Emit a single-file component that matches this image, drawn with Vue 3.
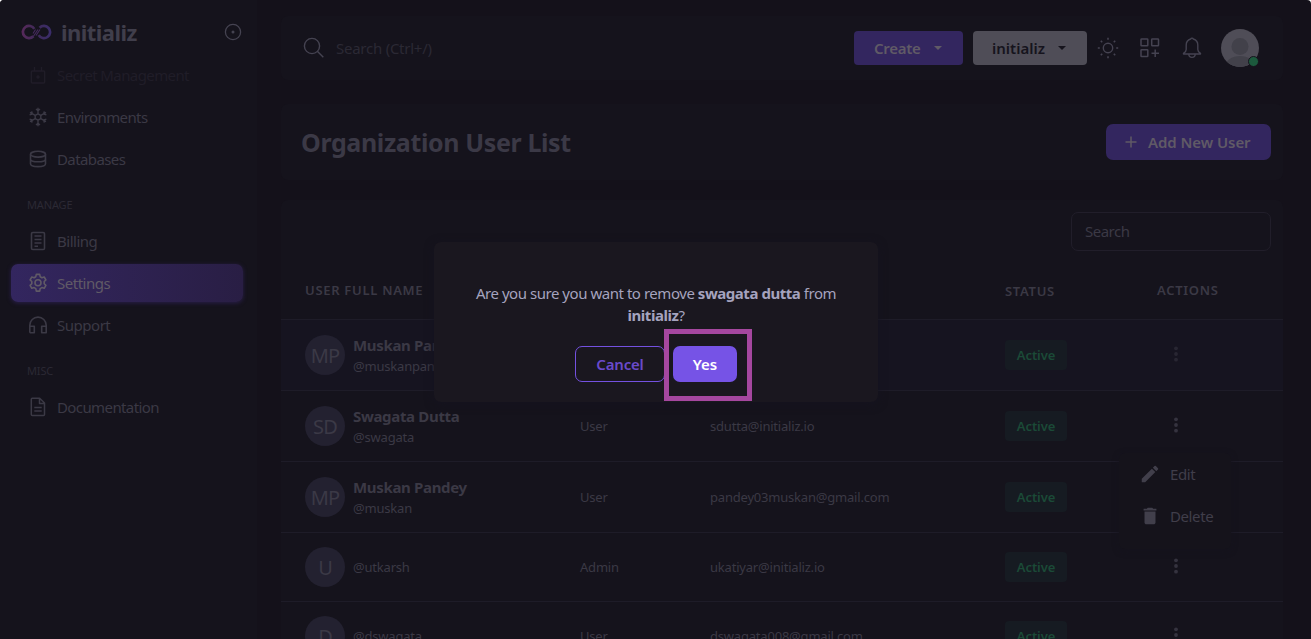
<script setup>
const mainNav = [
  { label: 'Environments', icon: 'snow' },
  { label: 'Databases', icon: 'db' },
]
const manageNav = [
  { label: 'Billing', icon: 'bill' },
  { label: 'Settings', icon: 'gear', active: true },
  { label: 'Support', icon: 'head' },
]
const groups = [
  { title: null, items: mainNav },
  { title: 'MANAGE', items: manageNav },
  { title: 'MISC', items: [{ label: 'Documentation', icon: 'doc' }] },
]
const users = [
  { initials: 'MP', name: 'Muskan Pandey', handle: '@muskanpandey', role: 'User', email: 'muskan@initializ.io', faded: true },
  { initials: 'SD', name: 'Swagata Dutta', handle: '@swagata', role: 'User', email: 'sdutta@initializ.io' },
  { initials: 'MP', name: 'Muskan Pandey', handle: '@muskan', role: 'User', email: 'pandey03muskan@gmail.com' },
  { initials: 'U', handle: '@utkarsh', role: 'Admin', email: 'ukatiyar@initializ.io' },
  { initials: 'D', handle: '@dswagata', role: 'User', email: 'dswagata008@gmail.com' },
]
</script>

<template>
  <div class="page">
    <aside class="sidebar">
      <div class="brand">
        <svg class="logo" width="31" height="16" viewBox="0 0 31 16" fill="none">
          <defs>
            <linearGradient id="lg" x1="0" y1="0" x2="31" y2="0" gradientUnits="userSpaceOnUse">
              <stop offset="0" stop-color="#58295a" />
              <stop offset=".5" stop-color="#3f2a58" />
              <stop offset="1" stop-color="#3a2d6c" />
            </linearGradient>
          </defs>
          <path d="M13.300 4.900A6.100 6.100 0 1 0 12.400 12.200M17.700 11.100A6.100 6.100 0 1 0 18.600 3.800" stroke="url(#lg)" stroke-width="2.700" />
          <path d="M12.300 12.500l4.700-7M15 11.500l4-6M12 9.500l2.500-4" stroke="#462b5e" stroke-width="1.100" />
        </svg>
        <span class="brand-name">initializ</span>
        <svg class="pin" width="18" height="18" viewBox="0 0 18 18" fill="none">
          <circle cx="9" cy="9" r="7.600" stroke="#454351" stroke-width="1.300" />
          <circle cx="9" cy="9" r="1.500" fill="#454351" />
        </svg>
      </div>
      <div class="item ghost">
        <svg width="20" height="20" viewBox="0 0 20 20" fill="none" stroke="currentColor" stroke-width="1.400">
          <rect x="3.300" y="6" width="13.400" height="12" rx="1" />
          <path d="M6.500 2v4M13.500 2v4" />
          <circle cx="10" cy="12" r="1" fill="currentColor" />
        </svg>
        <span>Secret Management</span>
      </div>
      <template v-for="(g, gi) in groups" :key="gi">
        <div v-if="g.title" class="group">{{ g.title }}</div>
        <div v-for="it in g.items" :key="it.label" class="item" :class="{ active: it.active }">
          <svg width="20" height="20" viewBox="0 0 20 20" fill="none" stroke="currentColor" stroke-width="1.600" stroke-linejoin="round">
            <g v-if="it.icon === 'snow'" stroke-width="1.400">
              <path d="M10 .8v6M10 13.200v6M2 5.400l5.200 3M12.800 11.600l5.200 3M2 14.600l5.200-3M12.800 8.400l5.200-3M8 2l2 1.800L12 2M8 18l2-1.800 2 1.800M1.600 7.900l2.600-.9-.5-2.700M18.400 12.100l-2.600.9.500 2.700M1.600 12.100l2.600.9-.5 2.700M18.400 7.900l-2.600-.9.500-2.700" />
              <path d="M10 6.800l2.800 1.600v3.200L10 13.200l-2.800-1.600V8.400z" />
            </g>
            <g v-else-if="it.icon === 'db'">
              <ellipse cx="10" cy="5.200" rx="7.500" ry="2.900" />
              <path d="M2.500 5.200v9.500c0 1.700 3.300 2.900 7.500 2.900s7.500-1.200 7.500-2.900V5.200M2.500 9.900c0 1.700 3.300 2.900 7.500 2.900s7.500-1.200 7.500-2.900" />
            </g>
            <g v-else-if="it.icon === 'bill'">
              <rect x="3.500" y="1.500" width="13" height="17" rx="1.300" />
              <path d="M6.500 5h7M6.500 8.500h7M6.500 12h7M6.500 15.300h3.500" />
            </g>
            <g v-else-if="it.icon === 'gear'">
              <path d="M8.300 1.400h3.400l.5 2.300 1.700 1 2.300-.7 1.700 2.900L16.200 8.500v2.200l1.700 1.700-1.700 2.900-2.300-.7-1.700 1-.5 2.500H8.300l-.5-2.500-1.700-1-2.300.7-1.700-2.900 1.700-1.700V8.500L2.100 6.900 3.800 4l2.300.7 1.700-1z" />
              <circle cx="10" cy="9.700" r="3" />
            </g>
            <g v-else-if="it.icon === 'head'">
              <path d="M1.800 17.800V10.300a8.200 8.200 0 0 1 16.400 0v7.500h-4.500v-6.500h4.500M1.800 11.300h4.500v6.500H1.800" />
            </g>
            <g v-else stroke-width="1.500">
              <path d="M4.300 1.200h7.400l4.800 4.800v11.600a1 1 0 0 1-1 1H4.300a1 1 0 0 1-1-1V2.200a1 1 0 0 1 1-1zM11.500 1.500v5h4.800M6.300 10.400h7.400M6.300 14h7.400" />
            </g>
          </svg>
          <span :class="'t-' + it.icon">{{ it.label }}</span>
        </div>
      </template>
    </aside>

    <main class="main">
      <header class="card topbar">
        <svg width="22" height="22" viewBox="0 0 22 22" fill="none" stroke="#454351" stroke-width="1.400">
          <circle cx="9" cy="9" r="7.600" />
          <path d="M14.300 14.300l6 6" />
        </svg>
        <span class="hint">Search (Ctrl+/)</span>
        <button class="btn create"><span>Create</span><i class="caret"></i></button>
        <button class="btn org"><span>initializ</span><i class="caret"></i></button>
        <svg class="sun" width="22" height="22" viewBox="0 0 22 22" fill="none" stroke="#454351" stroke-width="1.400">
          <circle cx="11" cy="11" r="4.700" />
          <path stroke-width="1.600" d="M11 .8v2M11 19.200v2M.8 11h2M19.200 11h2M3.800 3.800l1.400 1.400M16.800 16.800l1.400 1.400M3.800 18.200l1.400-1.400M16.800 5.200l1.400-1.400" />
        </svg>
        <svg class="grid" width="22" height="22" viewBox="0 0 22 22" fill="none" stroke="#454351" stroke-width="1.500">
          <rect x="2" y="2" width="6.800" height="6.800" rx=".6" />
          <rect x="12.700" y="2" width="6.800" height="6.800" rx=".6" />
          <rect x="2" y="12.700" width="6.800" height="6.800" rx=".6" />
          <path d="M16.200 12.500v7.500M12.500 16.200H20" />
        </svg>
        <svg class="bell" width="22" height="24" viewBox="0 0 22 24" fill="none" stroke="#454351" stroke-width="1.400" stroke-linejoin="round">
          <path d="M9.700 3a1.400 1.400 0 0 1 2.600 0 6.200 6.200 0 0 1 4.500 6v4.500c0 1.500 1.200 3 2.700 3.900v.6h-17v-.6c1.500-.9 2.700-2.400 2.700-3.900V9a6.200 6.200 0 0 1 4.500-6zM7.800 18c0 4.500 6.400 4.500 6.400 0" />
        </svg>
        <div class="me">
          <svg width="38" height="38" viewBox="0 0 38 38">
            <defs><clipPath id="round"><circle cx="19" cy="19" r="19" /></clipPath></defs>
            <g clip-path="url(#round)">
              <rect width="38" height="38" fill="#4f4d57" />
              <circle cx="19" cy="17.500" r="8.500" fill="#42414a" />
              <ellipse cx="19" cy="38" rx="15" ry="11" fill="#42414a" />
            </g>
          </svg>
          <i class="online"></i>
        </div>
      </header>

      <section class="card title">
        <h1>Organization User List</h1>
        <button class="add">
          <svg width="12" height="12" viewBox="0 0 12 12" stroke="#605a66" stroke-width="1.500"><path d="M6 .5v11M.5 6h11" /></svg>
          <span>Add New User</span>
        </button>
      </section>

      <section class="card list">
        <div class="filter"><div class="search">Search</div></div>
        <div class="row head">
          <span class="c1">USER FULL NAME</span>
          <span class="c2"></span>
          <span class="c3"></span>
          <span class="c4">STATUS</span>
          <span class="c5">ACTIONS</span>
        </div>
        <div v-for="(u, i) in users" :key="i" class="row" :class="{ short: !u.name, faded: u.faded }">
          <div class="c1 who">
            <div class="avatar">{{ u.initials }}</div>
            <div class="names">
              <b v-if="u.name">{{ u.name }}</b>
              <span>{{ u.handle }}</span>
            </div>
          </div>
          <span class="c2">{{ u.role }}</span>
          <span class="c3">{{ u.email }}</span>
          <span class="c4"><em class="chip">Active</em></span>
          <span class="c5"><svg class="dots" width="6" height="18" viewBox="0 0 6 18" fill="currentColor"><circle cx="3" cy="3.300" r="1.900" /><circle cx="3" cy="9" r="1.900" /><circle cx="3" cy="14.700" r="1.900" /></svg></span>
        </div>
      </section>
    </main>

    <div class="menu">
      <div class="opt">
        <svg width="22" height="22" viewBox="0 0 24 24" fill="#413f4b"><path d="M3 17.250V21h3.750L17.810 9.940l-3.750-3.750L3 17.250zM20.710 7.040a1 1 0 0 0 0-1.410l-2.340-2.340a1 1 0 0 0-1.410 0l-1.830 1.830 3.750 3.750 1.830-1.830z" /></svg>
        <span>Edit</span>
      </div>
      <div class="opt">
        <svg width="22" height="22" viewBox="0 0 24 24" fill="#413f4b"><path d="M6 19c0 1.100.9 2 2 2h8c1.100 0 2-.9 2-2V7H6v12zM19 4h-3.500l-1-1h-5l-1 1H5v2h14V4z" /></svg>
        <span>Delete</span>
      </div>
    </div>

    <div class="modal">
      <p>Are you sure you want to remove <b>swagata dutta</b> from <b>initializ</b>?</p>
      <div class="acts">
        <button class="cancel">Cancel</button>
        <button class="yes">Yes</button>
      </div>
    </div>
    <div class="marker"></div>
  </div>
</template>

<style>
html, body { background: #fff; overflow: hidden; }
</style>

<style scoped>
* { box-sizing: border-box; }
button { border: 0; padding: 0; font: inherit; background: none; }
.page {
  position: relative; display: flex; width: 1311px; height: 639px; overflow: hidden;
  border-radius: 4px 4px 0 0; background: #14111a; color: #3b3945;
  font-family: "Noto Sans", "Open Sans", sans-serif; font-size: 15px; letter-spacing: -.5px;
}
.sidebar { width: 257px; flex: none; background: #15131c; padding: 0 14px 0 11px; }
.brand { display: flex; align-items: center; height: 64px; padding-left: 10px; }
.brand-name { margin-left: 9px; font-size: 22px; font-weight: 700; color: #403e4b; letter-spacing: -.55px; }
.pin { margin-left: auto; margin-right: 1px; }
.item {
  display: flex; align-items: center; height: 38px; margin-bottom: 4px; padding-left: 17px;
  gap: 9px; border-radius: 7px; letter-spacing: -.6px;
}
.item svg { flex: none; }
.t-bill, .t-gear, .t-head { letter-spacing: -.48px; }
.ghost { color: #201d28; margin-top: -8px; }
.active {
  color: #605a66; background: linear-gradient(90deg, #33265f, #291e44);
  box-shadow: 0 1px 4px #2a1f4c;
}
.group { height: 40px; padding: 12px 0 0 16px; font-size: 11px; line-height: 22px; color: #2b2934; letter-spacing: -.15px; }
.main { flex: 1; padding: 16px 28px 0 24px; }
.card { background: #15131c; border-radius: 7px; }
.topbar { display: flex; align-items: center; height: 64px; padding: 0 24px 0 22px; }
.hint { margin-left: 11px; color: #2b2934; letter-spacing: -.25px; }
.btn { display: flex; align-items: center; height: 34px; border-radius: 4px; font-weight: 600; }
.caret { border: 4px solid transparent; border-top-color: currentColor; border-bottom: 0; }
.create { width: 109px; margin-left: auto; padding: 0 21px 0 20px; justify-content: space-between; background: #33265f; color: #605a66; letter-spacing: -.3px; }
.org { width: 114px; margin-left: 10px; padding: 0 21px 0 19px; justify-content: space-between; background: #4f4d57; color: #16141d; letter-spacing: 0; }
.sun { margin-left: 10px; }
.grid, .bell { margin-left: 20px; }
.me { position: relative; width: 38px; height: 38px; margin-left: 18px; }
.online { position: absolute; right: 0; bottom: 0; width: 11px; height: 11px; border-radius: 50%; background: #1c5a3d; border: 1.500px solid #16141d; }
.title { display: flex; align-items: center; justify-content: space-between; height: 76px; margin-top: 24px; padding: 0 12px 0 20px; }
h1 { margin: 0; font-size: 25px; font-weight: 700; color: #3b3946; letter-spacing: -.38px; }
.add { display: flex; align-items: center; gap: 11px; width: 165px; height: 36px; padding-left: 19px; border-radius: 7px; background: #33265f; color: #605a66; font-weight: 600; letter-spacing: -.07px; white-space: nowrap; }
.list { margin-top: 20px; height: 460px; }
.filter { display: flex; justify-content: flex-end; padding: 12px 12px 0 0; height: 61px; }
.search { width: 200px; height: 39px; border: 1px solid #211e2a; border-radius: 7px; padding-left: 13px; line-height: 37px; }
.row {
  display: grid; grid-template-columns: 275px 130px 295px 147px 1fr; align-items: center;
  height: 71px; padding-left: 24px; border-bottom: 1px solid #1e1c28; font-size: 13px; letter-spacing: -.2px;
}
.row.head { height: 59px; font-weight: 600; letter-spacing: .7px; }
.head .c5 { padding-left: 5px; }
.head .c4 { position: relative; top: 1px; }
.row.short { height: 69px; }
.who { display: flex; align-items: center; gap: 8px; }
.avatar { width: 40px; height: 40px; border-radius: 50%; background: #232130; display: flex; align-items: center; justify-content: center; font-size: 20px; color: #3b3946; letter-spacing: -.9px; }
.names { display: flex; flex-direction: column; line-height: 21px; }
.row:not(.short) .names { padding-top: 2px; }
.names b { font-size: 15px; letter-spacing: -.33px; }
.chip { display: block; width: 62px; height: 30px; line-height: 30px; text-align: center; border-radius: 4px; background: #161b22; color: #1b4a37; font-style: normal; font-weight: 600; font-size: 13px; letter-spacing: -.1px; }
.row .c5 .dots { display: block; margin-left: 21px; color: #35333f; position: relative; top: -1px; }
.faded { background: #161420; }
.faded .c5 { opacity: .6; }
.menu { position: absolute; left: 1119px; top: 453px; width: 112px; height: 96px; padding: 0 0 0 20px; background: #15131b; border-radius: 6px; box-shadow: 0 2px 6px #15131d; }
.opt { display: flex; align-items: center; height: 42px; gap: 9px; color: #403e4a; letter-spacing: -.4px; }
.modal { position: absolute; left: 434px; top: 242px; width: 444px; height: 160px; padding: 40px 36px 0; border-radius: 7px; background: #1a171f; color: #a5a3be; text-align: center; box-shadow: 0 2px 10px #15131f; }
.modal p { margin: 0; line-height: 22px; font-size: 15px; letter-spacing: -.46px; }
.acts { display: flex; gap: 8px; margin: 20px 0 0 105px; }
.cancel { width: 90px; height: 36px; border: 1px solid #7451e0; border-radius: 7px; color: #6a4acb; font-weight: 600; letter-spacing: -.2px; }
.yes { width: 64px; height: 36px; border-radius: 7px; background: #7653e6; color: #fff; font-weight: 600; }
.marker { position: absolute; left: 664px; top: 329px; width: 88px; height: 72px; border: 5px solid #a5479f; }
</style>
